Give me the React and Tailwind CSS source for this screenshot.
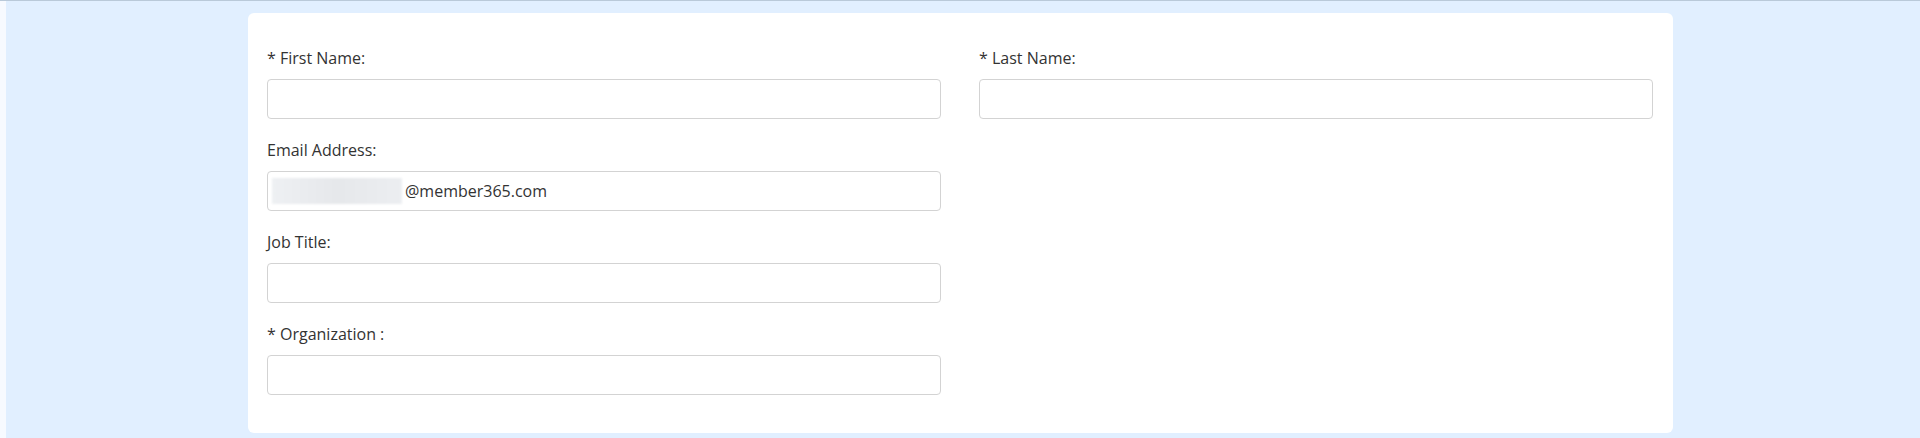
import React from "react";

const Field = ({ label, children, className = "" }) => {
  return (
    <div className={"flex flex-col " + className}>
      <label className="text-[16px] leading-[24px] text-[#333333] mb-[9px]">
        {label}
      </label>
      <div className="h-[40px] w-full rounded-[4px] border border-[#d3d3d3] bg-white flex items-center px-[4px]">
        {children}
      </div>
    </div>
  );
};

const App = () => {
  return (
    <div
      className="h-[438px] w-full bg-[#e1efff] border-t border-[#b9c9d9] flex overflow-hidden"
      style={{ fontFamily: '"Open Sans", "Liberation Sans", sans-serif' }}
    >
      <div className="w-[6px] bg-[#f7faff] shrink-0"></div>
      <div className="flex-1 pl-[242px] pt-[12px]">
        <div className="w-[1425px] h-[420px] bg-white rounded-[6px] pl-[19px] pr-[20px] pt-[33px]">
          <div className="grid grid-cols-2 gap-x-[38px]">
            <div className="flex flex-col">
              <Field label="* First Name:" />
              <Field label="Email Address:" className="mt-[19.33px]">
                <div className="h-[26px] w-[130px] bg-gradient-to-r from-[#eef0f3] via-[#e6e8eb] to-[#eceef1] blur-[1px]"></div>
                <span className="text-[16px] leading-[24px] text-[#333333] ml-[3px] -mt-[1px]">
                  @member365.com
                </span>
              </Field>
              <Field label="Job Title:" className="mt-[19px]" />
              <Field label="* Organization :" className="mt-[19px]" />
            </div>
            <div className="flex flex-col">
              <Field label="* Last Name:" />
            </div>
          </div>
        </div>
      </div>
    </div>
  );
};

export default App;
